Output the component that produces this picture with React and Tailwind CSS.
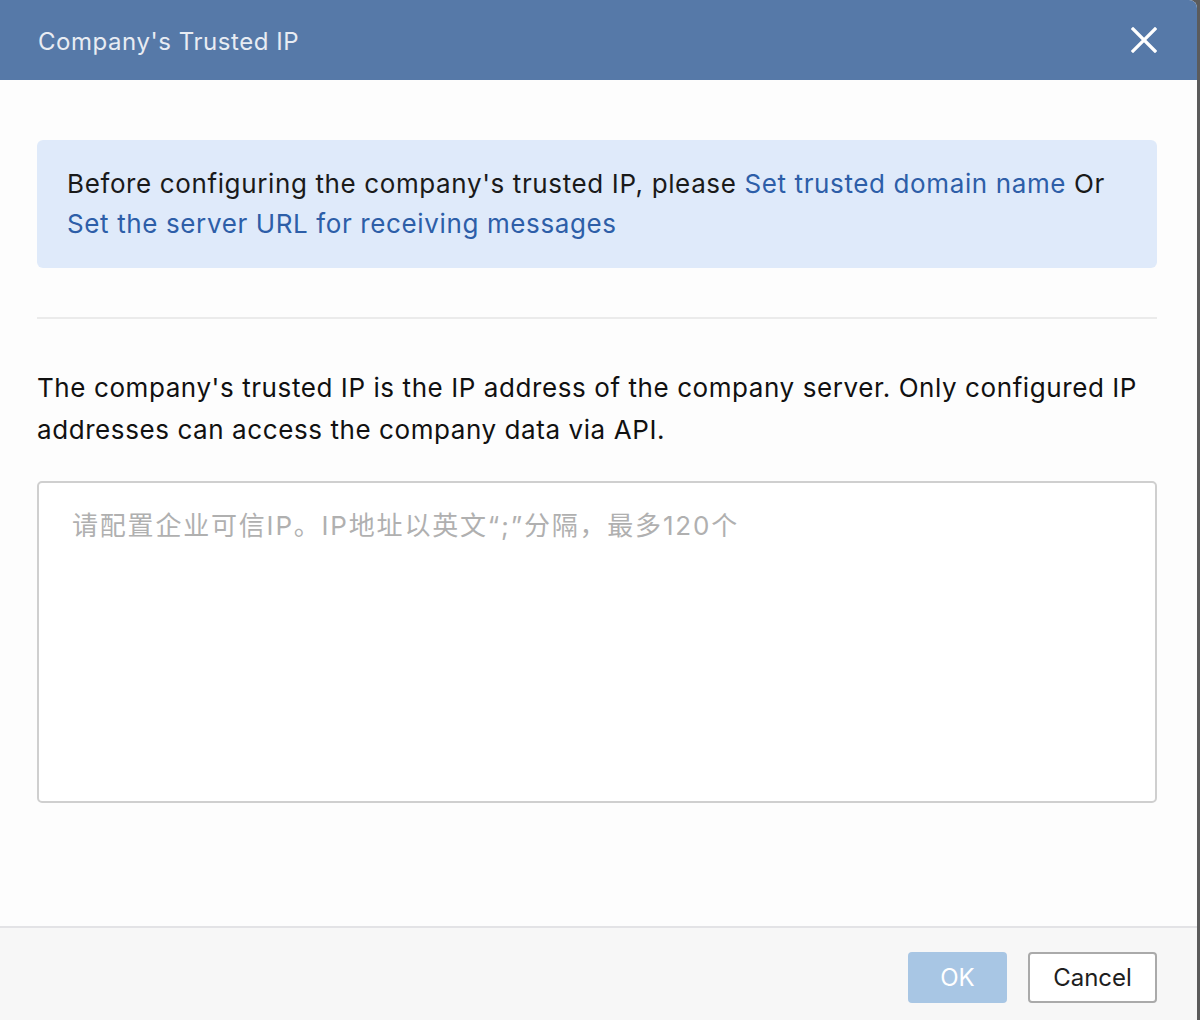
import React from "react";

export default function App() {
  const font = { fontFamily: 'Inter, "Noto Sans CJK SC", sans-serif' };
  return (
    <div className="w-[1200px] h-[1020px] bg-[#5b5b5b] flex overflow-hidden" style={font}>
      <div className="w-[1197px] h-[1020px] flex flex-col bg-[#fdfdfd] rounded-tr-[8px] overflow-hidden">
        <div className="h-[80px] shrink-0 bg-[#5679a8] flex items-center justify-between pl-[38px] pr-[40px]">
          <div className="text-[24px] text-[#e8ecf3] tracking-[0.55px] pt-[3px]">Company's Trusted IP</div>
          <svg width="26" height="26" viewBox="0 0 26 26" className="block">
            <path d="M2 2 L24 24 M24 2 L2 24" stroke="#ffffff" strokeWidth="3.2" strokeLinecap="square" />
          </svg>
        </div>
        <div className="flex-1 flex flex-col pl-[37px] pr-[40px] pt-[60px]">
          <div className="bg-[#dfeafa] rounded-[6px] px-[30px] py-[24px] text-[26px] leading-[40px] tracking-[0.62px] text-[#1a1a1a]">
            Before configuring the company's trusted IP, please{" "}
            <span className="text-[#2d5ea8]">Set trusted domain name</span> Or{" "}
            <span className="text-[#2d5ea8]">Set the server URL for receiving messages</span>
          </div>
          <div className="mt-[49px] h-[2px] bg-[#ebebeb]" />
          <p className="mt-[48px] text-[26px] leading-[42px] tracking-[0.58px] text-[#111]">
            The company's trusted IP is the IP address of the company server. Only configured IP addresses can access the company data via API.
          </p>
          <div className="mt-[30px] h-[322px] border-2 border-[#cfcfcf] rounded-[5px] bg-white px-[33px] pt-[23px]">
            <div className="text-[26px] leading-[40px] tracking-[1.8px] text-[#b0b0b0]">请配置企业可信IP。IP地址以英文“;”分隔，最多120个</div>
          </div>
        </div>
        <div className="h-[94px] shrink-0 border-t-2 border-[#e3e3e6] bg-[#f7f7f7] flex items-start justify-end gap-[21px] pr-[40px] pt-[24px]">
          <div className="w-[99px] h-[51px] rounded-[4px] bg-[#a8c6e4] flex items-center justify-center text-[24px] text-white">OK</div>
          <div className="w-[129px] h-[51px] rounded-[4px] bg-white border-2 border-[#aaaaaa] flex items-center justify-center text-[24px] text-[#1e1e1e]">Cancel</div>
        </div>
      </div>
    </div>
  );
}
